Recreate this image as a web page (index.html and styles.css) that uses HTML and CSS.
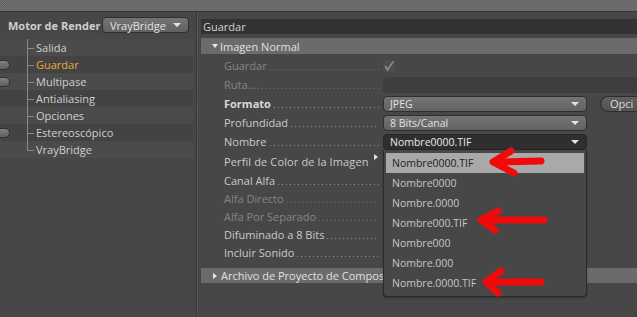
FILE: index.html
```html
<!DOCTYPE html>
<html lang="es">
<head>
    <meta charset="UTF-8">
    <meta name="viewport" content="width=device-width, initial-scale=1.0">
    <title>Ajustes de Render</title>
    <link rel="stylesheet" href="styles.css">
</head>
<body>
    <div class="topbar"><span class="grip"></span></div>

    <div class="main">
        <aside class="sidebar">
            <div class="engine">
                <span class="engine-label">Motor de Render</span>
                <div class="select small">VrayBridge<span class="caret"></span></div>
            </div>
            <ul class="tree">
                <li class="row light"><span class="sw"></span><span class="node">Salida</span></li>
                <li class="row"><span class="sw"><i class="pill"></i></span><span class="node active">Guardar</span></li>
                <li class="row light"><span class="sw"><i class="pill"></i></span><span class="node">Multipase</span></li>
                <li class="row"><span class="sw"></span><span class="node">Antialiasing</span></li>
                <li class="row light"><span class="sw"></span><span class="node">Opciones</span></li>
                <li class="row"><span class="sw"><i class="pill"></i></span><span class="node">Estereoscópico</span></li>
                <li class="row light last"><span class="sw"></span><span class="node">VrayBridge</span></li>
            </ul>
        </aside>

        <section class="content">
            <div class="title">Guardar</div>
            <div class="group"><span class="tri down"></span>Imagen Normal</div>

            <div class="props">
                <div class="prop dim">
                    <div class="label"><span>Guardar</span><i class="dots"></i></div>
                    <div class="check">
                        <svg width="12" height="12" viewBox="0 0 12 12"><path d="M2.5 6.5 L4.5 10 L10 2" fill="none" stroke="#8c8c8c" stroke-width="1.6" stroke-linecap="round"/></svg>
                    </div>
                </div>
                <div class="prop dim">
                    <div class="label"><span>Ruta....</span><i class="dots"></i></div>
                    <div class="field"></div>
                </div>
                <div class="prop strong">
                    <div class="label"><span>Formato</span><i class="dots"></i></div>
                    <div class="select wide">JPEG<span class="caret"></span></div>
                    <div class="btn">Opci</div>
                </div>
                <div class="prop">
                    <div class="label"><span>Profundidad</span><i class="dots"></i></div>
                    <div class="select wide">8 Bits/Canal<span class="caret"></span></div>
                </div>
                <div class="prop">
                    <div class="label"><span>Nombre</span><i class="dots"></i></div>
                    <div class="combo">
                        <div class="select wide open">Nombre0000.TIF<span class="caret"></span></div>
                        <ul class="popup">
                            <li class="item sel">Nombre0000.TIF</li>
                            <li class="item">Nombre0000</li>
                            <li class="item">Nombre.0000</li>
                            <li class="item">Nombre000.TIF</li>
                            <li class="item">Nombre000</li>
                            <li class="item">Nombre.000</li>
                            <li class="item">Nombre.0000.TIF</li>
                        </ul>
                    </div>
                </div>
                <div class="prop tall">
                    <div class="label"><span class="wide-text">Perfil de Color de la Imagen</span><i class="sub"></i></div>
                </div>
                <div class="prop short">
                    <div class="label"><span>Canal Alfa</span><i class="dots"></i></div>
                </div>
                <div class="prop short dim">
                    <div class="label"><span>Alfa Directo</span><i class="dots"></i></div>
                </div>
                <div class="prop short dim">
                    <div class="label"><span>Alfa Por Separado</span><i class="dots"></i></div>
                </div>
                <div class="prop short">
                    <div class="label"><span>Difuminado a 8 Bits</span><i class="dots"></i></div>
                </div>
                <div class="prop short">
                    <div class="label"><span>Incluir Sonido</span><i class="dots"></i></div>
                </div>
            </div>

            <div class="group closed"><span class="tri right"></span><span class="clip">Archivo de Proyecto de Compos</span></div>
        </section>
    </div>

    <!-- red annotation arrows drawn over the screenshot -->
    <svg class="marks" width="637" height="317" viewBox="0 0 637 317">
        <g fill="none" stroke="#f20a0a" stroke-width="7" stroke-linecap="round" stroke-linejoin="round">
            <path d="M541 161 L494 162"/>
            <path d="M511 151 L493 162 L514 173"/>
            <path d="M544 220 L482 220"/>
            <path d="M498 211 L481 220 L495 230"/>
            <path d="M541 282 L487 282"/>
            <path d="M501 271 L486 282 L498 293"/>
        </g>
    </svg>
</body>
</html>
```

FILE: styles.css
```css
body {
    margin: 0;
    width: 637px;
    height: 317px;
    overflow: hidden;
    position: relative;
    background-color: #474747;
    color: #c9c9c9;
    font-family: 'Open Sans', 'Noto Sans', sans-serif;
    font-size: 11px;
}

ul {
    list-style: none;
    margin: 0;
    padding: 0;
}

.topbar {
    height: 11px;
    background-color: #6b6b6b;
    border-bottom: 1px solid #393939;
}

.grip {
    display: block;
    width: 10px;
    height: 8px;
    background: repeating-conic-gradient(#595959 0 25%, #7c7c7c 0 50%) 0 0 / 2px 2px;
}

.main {
    display: flex;
    height: 305px;
}

/* left column */
.sidebar {
    width: 196px;
    flex: none;
    border-right: 1px solid #383838;
}

.engine {
    display: flex;
    align-items: center;
    height: 16px;
    padding-top: 5px;
}

.engine-label {
    margin-left: 8px;
    width: 94px;
    font-size: 11px;
    font-weight: bold;
    color: #cfcfcf;
    white-space: nowrap;
}

.select {
    display: flex;
    align-items: center;
    box-sizing: border-box;
    height: 16px;
    padding-left: 6px;
    border: 1px solid #2f2f2f;
    border-radius: 4px;
    background: linear-gradient(#747474, #626262);
    color: #e2e2e2;
    font-size: 10.5px;
    white-space: nowrap;
}

.select.small {
    width: 87px;
    padding-left: 7px;
    font-size: 11px;
}

.caret {
    margin-left: auto;
    margin-right: 7px;
    width: 0;
    height: 0;
    border-left: 4px solid transparent;
    border-right: 4px solid transparent;
    border-top: 4px solid #e4e4e4;
}

.tree {
    margin-top: 6px;
}

.row {
    display: flex;
    height: 17px;
    width: 193px;
    background-color: #434343;
}

.row.light {
    background-color: #4b4b4b;
}

.sw {
    width: 27px;
    flex: none;
    display: flex;
    align-items: center;
}

.pill {
    box-sizing: border-box;
    width: 18px;
    height: 10px;
    margin-left: -8px;
    border: 1px solid #333;
    border-radius: 5px;
    background: linear-gradient(#808080, #5e5e5e);
}

.node {
    position: relative;
    display: flex;
    align-items: center;
    padding-left: 9px;
    font-size: 11px;
    color: #cfcfcf;
}

.node::before {
    content: "";
    position: absolute;
    left: 0;
    top: 0;
    bottom: 0;
    width: 1px;
    background-color: #8a8a8a;
}

.row.last .node::before {
    bottom: 50%;
}

.node::after {
    content: "";
    position: absolute;
    left: 0;
    top: 50%;
    width: 7px;
    height: 1px;
    background-color: #8a8a8a;
}

.node.active {
    color: #eaa73a;
}

/* right column */
.content {
    flex: 1;
    min-width: 0;
    border-left: 1px solid #565656;
    padding-left: 3px;
    overflow: hidden;
}

.title {
    margin-top: 7px;
    height: 15px;
    line-height: 15px;
    padding-left: 2px;
    background-color: #333;
    color: #d2d2d2;
    font-size: 11px;
}

.group {
    display: flex;
    align-items: center;
    margin-top: 4px;
    height: 16px;
    padding-left: 11px;
    background-color: #6b6b6b;
    color: #e0e0e0;
    font-size: 11px;
    white-space: nowrap;
}

.group.closed {
    margin-top: 7px;
    height: 15px;
    padding-left: 12px;
}

.tri {
    width: 0;
    height: 0;
}

.tri.down {
    margin-right: 2px;
    border-left: 3.5px solid transparent;
    border-right: 3.5px solid transparent;
    border-top: 4px solid #e8e8e8;
}

.tri.right {
    margin-right: 4px;
    border-top: 3.5px solid transparent;
    border-bottom: 3.5px solid transparent;
    border-left: 4px solid #e8e8e8;
}

.props {
    margin-top: 2px;
}

.prop {
    display: flex;
    align-items: center;
    height: 19px;
}

.prop.tall {
    height: 20px;
}

.prop.short {
    height: 18px;
}

.label {
    display: flex;
    align-items: center;
    flex: none;
    width: 156px;
    padding-left: 23px;
    margin-right: 3px;
    white-space: nowrap;
    color: #cacaca;
}

.wide-text {
    letter-spacing: 0.12px;
}

.prop.dim .label {
    color: #858585;
}

.prop.strong .label {
    font-weight: bold;
    color: #d9d9d9;
}

.dots {
    flex: 1;
    height: 1px;
    margin: 8px 1px 0 3px;
    background-image: linear-gradient(to right, #8c8c8c 1px, transparent 1px);
    background-size: 4px 1px;
}

.prop.dim .dots {
    background-image: linear-gradient(to right, #6f6f6f 1px, transparent 1px);
}

.sub {
    margin-left: auto;
    margin-right: 2px;
    margin-top: -8px;
    width: 0;
    height: 0;
    border-top: 3.5px solid transparent;
    border-bottom: 3.5px solid transparent;
    border-left: 4px solid #e2e2e2;
}

.check {
    display: flex;
    width: 12px;
    height: 12px;
    border-radius: 3px;
    background-color: #4d4d4d;
}

.field {
    flex: none;
    width: 300px;
    height: 16px;
    border-radius: 3px;
    background-color: #3e3e3e;
}

.select.wide {
    width: 204px;
    flex: none;
}

.select.open {
    background: #2f2f2f;
    border-color: #262626;
    color: #e8e8e8;
}

.btn {
    flex: none;
    box-sizing: border-box;
    width: 38px;
    height: 16px;
    margin-left: 13px;
    padding-left: 9px;
    line-height: 14px;
    border: 1px solid #2d2d2d;
    border-right: none;
    border-radius: 8px 0 0 8px;
    background: linear-gradient(#5f5f5f, #525252);
    color: #dcdcdc;
    font-size: 11px;
}

.combo {
    position: relative;
}

.popup {
    position: absolute;
    top: 100%;
    left: 0;
    z-index: 2;
    box-sizing: border-box;
    width: 204px;
    padding: 3px 2px;
    background-color: #474747;
    border: 1px solid #2a2a2a;
    border-top: none;
    border-radius: 0 0 4px 4px;
    box-shadow: 0 1px 2px rgba(0, 0, 0, 0.3);
}

.item {
    height: 20px;
    line-height: 20px;
    padding-left: 6px;
    color: #c6c6c6;
    font-size: 10.5px;
}

.item.sel {
    background-color: #a9a9a9;
    color: #1c1c1c;
}

.clip {
    display: block;
    width: 162px;
    overflow: hidden;
}

.marks {
    position: absolute;
    top: 0;
    left: 0;
    z-index: 5;
    pointer-events: none;
}
```
